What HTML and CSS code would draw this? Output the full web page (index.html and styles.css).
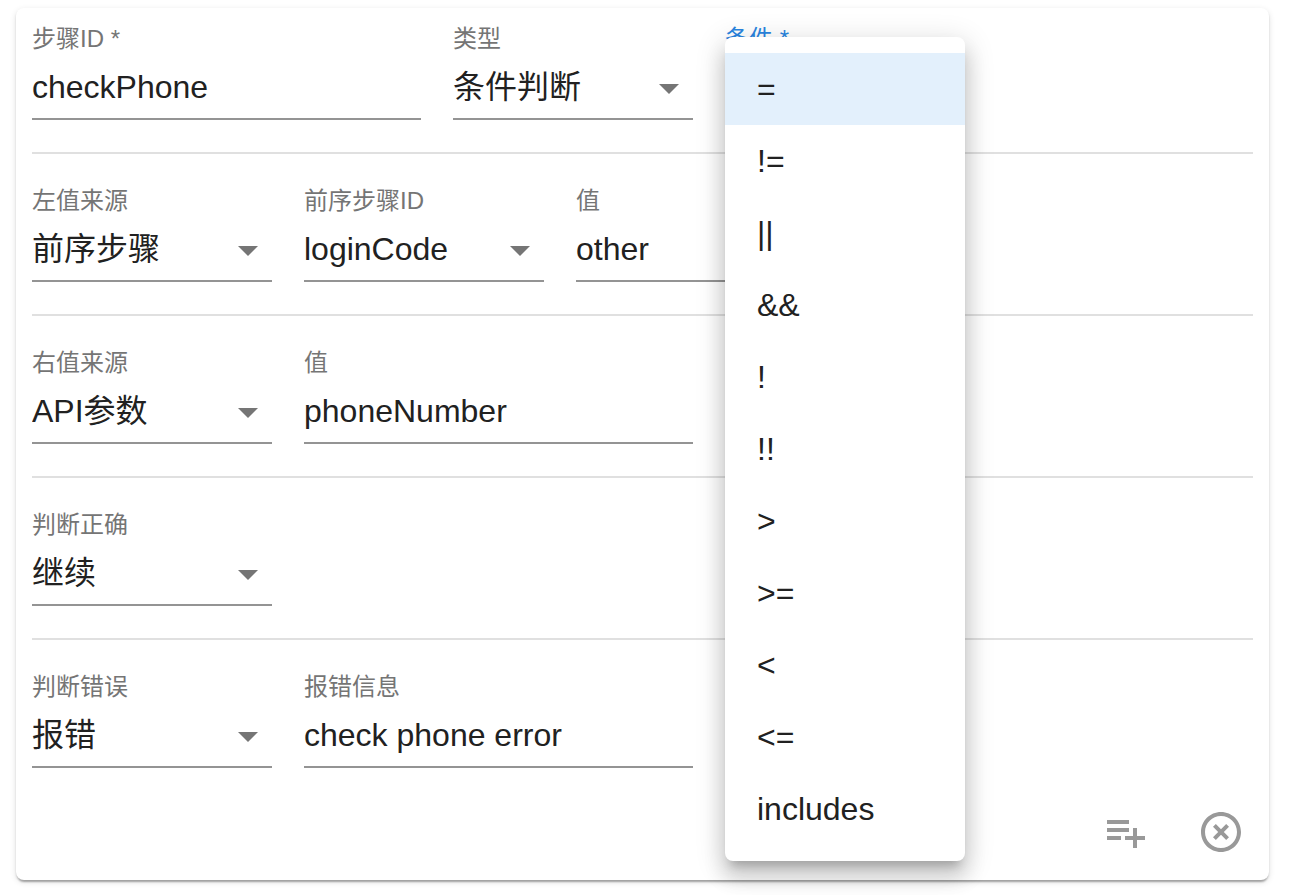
FILE: index.html
```html
<!DOCTYPE html>
<html lang="zh-CN">
<head>
    <meta charset="UTF-8">
    <meta name="viewport" content="width=device-width, initial-scale=1.0">
    <title>步骤</title>
    <link rel="stylesheet" href="styles.css">
</head>
<body>
    <form class="card">
        <div class="row">
            <div class="field field-text">
                <label for="stepId">步骤ID *</label>
                <input type="text" id="stepId" value="checkPhone">
            </div>
            <div class="field">
                <label for="stepType">类型</label>
                <select id="stepType"><option>条件判断</option></select>
                <svg class="arrow" viewBox="0 0 24 24"><path d="M7 10l5 5 5-5z"/></svg>
            </div>
            <div class="field field-active">
                <label for="condition">条件 *</label>
                <select id="condition"><option>=</option></select>
                <svg class="arrow" viewBox="0 0 24 24"><path d="M7 10l5 5 5-5z"/></svg>
                <!-- 展开的条件菜单 -->
                <div class="menu">
                    <button type="button" class="menu-item selected">=</button>
                    <button type="button" class="menu-item">!=</button>
                    <button type="button" class="menu-item">||</button>
                    <button type="button" class="menu-item">&amp;&amp;</button>
                    <button type="button" class="menu-item">!</button>
                    <button type="button" class="menu-item">!!</button>
                    <button type="button" class="menu-item">&gt;</button>
                    <button type="button" class="menu-item">&gt;=</button>
                    <button type="button" class="menu-item">&lt;</button>
                    <button type="button" class="menu-item">&lt;=</button>
                    <button type="button" class="menu-item">includes</button>
                </div>
            </div>
        </div>

        <div class="row">
            <div class="field">
                <label for="leftSource">左值来源</label>
                <select id="leftSource"><option>前序步骤</option></select>
                <svg class="arrow" viewBox="0 0 24 24"><path d="M7 10l5 5 5-5z"/></svg>
            </div>
            <div class="field">
                <label for="prevStep">前序步骤ID</label>
                <select id="prevStep"><option>loginCode</option></select>
                <svg class="arrow" viewBox="0 0 24 24"><path d="M7 10l5 5 5-5z"/></svg>
            </div>
            <div class="field field-text">
                <label for="leftValue">值</label>
                <input type="text" id="leftValue" value="other">
            </div>
        </div>

        <div class="row">
            <div class="field">
                <label for="rightSource">右值来源</label>
                <select id="rightSource"><option>API参数</option></select>
                <svg class="arrow" viewBox="0 0 24 24"><path d="M7 10l5 5 5-5z"/></svg>
            </div>
            <div class="field field-text">
                <label for="rightValue">值</label>
                <input type="text" id="rightValue" value="phoneNumber">
            </div>
        </div>

        <div class="row">
            <div class="field">
                <label for="onTrue">判断正确</label>
                <select id="onTrue"><option>继续</option></select>
                <svg class="arrow" viewBox="0 0 24 24"><path d="M7 10l5 5 5-5z"/></svg>
            </div>
        </div>

        <div class="row">
            <div class="field">
                <label for="onFalse">判断错误</label>
                <select id="onFalse"><option>报错</option></select>
                <svg class="arrow" viewBox="0 0 24 24"><path d="M7 10l5 5 5-5z"/></svg>
            </div>
            <div class="field field-text">
                <label for="errorMessage">报错信息</label>
                <input type="text" id="errorMessage" value="check phone error">
            </div>
        </div>

        <div class="actions">
            <button type="button" class="icon-button" aria-label="添加步骤">
                <svg viewBox="0 0 24 24"><path d="M14 10H3v2h11v-2zm0-4H3v2h11V6zm4 8v-4h-2v4h-4v2h4v4h2v-4h4v-2h-4zM3 16h7v-2H3v2z"/></svg>
            </button>
            <button type="button" class="icon-button" aria-label="删除步骤">
                <svg viewBox="0 0 24 24"><path d="M14.59 8L12 10.59 9.41 8 8 9.41 10.59 12 8 14.59 9.41 16 12 13.41 14.59 16 16 14.59 13.41 12 16 9.41 14.59 8zM12 2C6.47 2 2 6.47 2 12s4.47 10 10 10 10-4.47 10-10S17.53 2 12 2zm0 18c-4.41 0-8-3.59-8-8s3.59-8 8-8 8 3.59 8 8-3.59 8-8 8z"/></svg>
            </button>
        </div>
    </form>
</body>
</html>
```
FILE: styles.css
```css
* {
    box-sizing: border-box;
}
body {
    margin: 0;
    padding: 8px 20px 15px 16px;
    background: #fff;
    color: #212121;
}
body, input, select, button {
    font-family: "Liberation Sans", "Noto Sans CJK SC", sans-serif;
    font-size: 32px;
}
.card {
    padding-top: 16px;
    border-radius: 8px;
    background: #fff;
    box-shadow: 0 4px 2px -2px rgba(0, 0, 0, 0.2),
        0 2px 2px 0 rgba(0, 0, 0, 0.14),
        0 2px 6px 0 rgba(0, 0, 0, 0.12);
}
.row {
    display: flex;
    gap: 32px;
    margin: 0 16px;
}
.row + .row {
    margin-top: 32px;
    padding-top: 32px;
    border-top: 2px solid #e0e0e0;
}
.field {
    position: relative;
    display: flex;
    flex-direction: column;
    width: 240px;
    height: 96px;
}
.field-text {
    width: 389px;
}
.field label {
    height: 32px;
    font-size: 24px;
    line-height: 30px;
    color: #757575;
}
.field-active label {
    color: #2a85e0;
}
.field input,
.field select {
    width: 100%;
    height: 64px;
    padding: 0;
    border: 0;
    border-bottom: 2px solid #949494;
    border-radius: 0;
    outline: 0;
    background: transparent;
    color: inherit;
    appearance: none;
}
.arrow {
    position: absolute;
    top: 40px;
    right: 0;
    width: 48px;
    height: 48px;
    fill: #757575;
    pointer-events: none;
}
.menu {
    position: absolute;
    top: 13px;
    left: 0;
    z-index: 10;
    width: 100%;
    padding: 16px 0;
    border-radius: 8px;
    background: #fff;
    box-shadow: 0 10px 10px -6px rgba(0, 0, 0, 0.2),
        0 16px 20px 2px rgba(0, 0, 0, 0.14),
        0 6px 28px 4px rgba(0, 0, 0, 0.12);
}
.menu-item {
    display: block;
    width: 100%;
    height: 72px;
    padding: 0 32px;
    border: 0;
    background: transparent;
    color: inherit;
    text-align: left;
    cursor: pointer;
}
.menu-item.selected {
    background: #e3f0fc;
}
.actions {
    display: flex;
    justify-content: flex-end;
    margin-top: 16px;
}
.icon-button {
    display: flex;
    padding: 24px;
    border: 0;
    background: transparent;
    cursor: pointer;
}
.icon-button svg {
    width: 48px;
    height: 48px;
    fill: #999;
}
```
